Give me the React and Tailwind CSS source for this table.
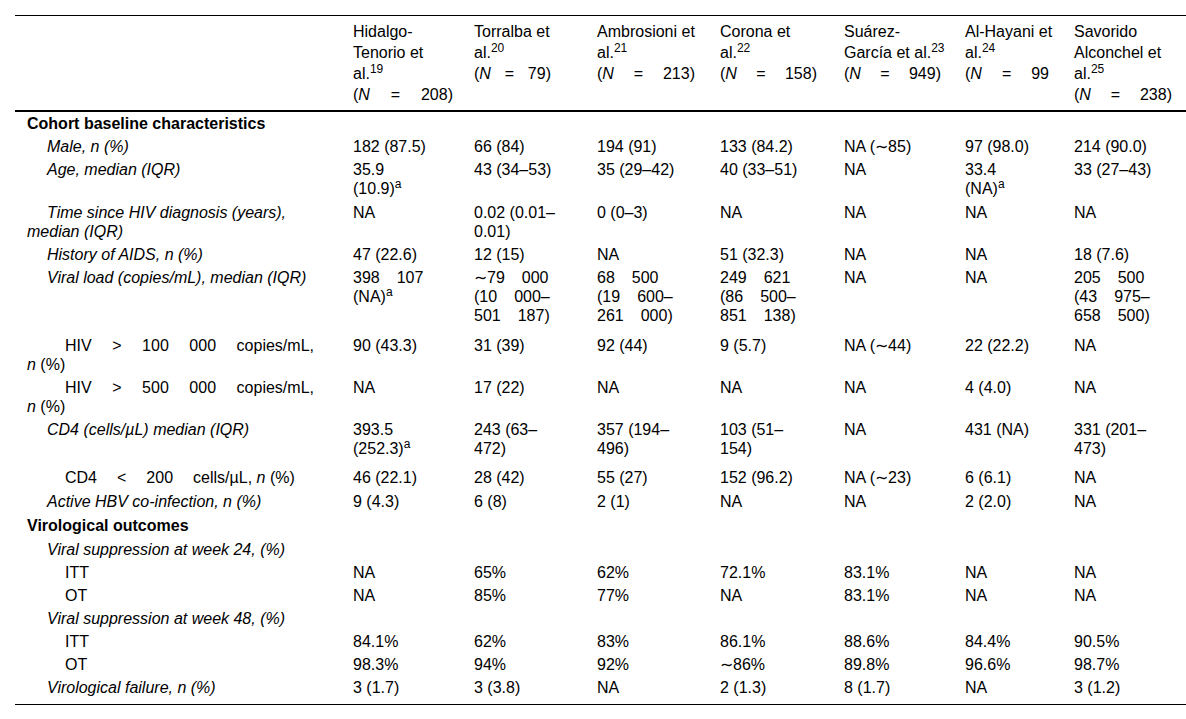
import React from 'react'

// spaced line: parts set apart by a wide gap (thin spaces in the source)
const J = (...parts) => ({ j: parts })
const N = (n) => ({ n: [<>(<i>N</i></>, '=', n] })

const colW = ['w-[100px]', 'w-[77px]', 'w-[98px]', 'w-[97px]', 'w-[97px]', 'w-[84px]', 'w-[98px]']

const heads = [
  ['Hidalgo-', 'Tenorio et', <>al.<sup>19</sup></>, N('208)')],
  ['Torralba et', <>al.<sup>20</sup></>, N('79)')],
  ['Ambrosioni et', <>al.<sup>21</sup></>, N('213)')],
  ['Corona et', <>al.<sup>22</sup></>, N('158)')],
  ['Suárez-', <>García et al.<sup>23</sup></>, N('949)')],
  ['Al-Hayani et', <>al.<sup>24</sup></>, N('99')],
  ['Savorido', 'Alconchel et', <>al.<sup>25</sup></>, N('238)')],
]

const a = <sup>a</sup>

const rows = [
  { section: 'Cohort baseline characteristics' },
  { label: ['Male, n (%)'], it: true, cells: ['182 (87.5)', '66 (84)', '194 (91)', '133 (84.2)', 'NA (∼85)', '97 (98.0)', '214 (90.0)'] },
  { label: ['Age, median (IQR)'], it: true, pb: 'pb-[3px]', cells: [['35.9', <>(10.9){a}</>], '43 (34–53)', '35 (29–42)', '40 (33–51)', 'NA', ['33.4', <>(NA){a}</>], '33 (27–43)'] },
  { label: ['Time since HIV diagnosis (years),', 'median (IQR)'], it: true, cells: ['NA', ['0.02 (0.01–', '0.01)'], '0 (0–3)', 'NA', 'NA', 'NA', 'NA'] },
  { label: ['History of AIDS, n (%)'], it: true, cells: ['47 (22.6)', '12 (15)', 'NA', '51 (32.3)', 'NA', 'NA', '18 (7.6)'] },
  {
    label: ['Viral load (copies/mL), median (IQR)'], it: true, pb: 'pb-[9px]',
    cells: [
      [J('398', '107'), <>(NA){a}</>],
      [J('∼79', '000'), J('(10', '000–'), J('501', '187)')],
      [J('68', '500'), J('(19', '600–'), J('261', '000)')],
      [J('249', '621'), J('(86', '500–'), J('851', '138)')],
      'NA', 'NA',
      [J('205', '500'), J('(43', '975–'), J('658', '500)')],
    ],
  },
  { label: [{ h: ['HIV', '>', '100', '000', 'copies/mL,'] }, <><i>n</i> (%)</>], lvl: 2, cells: ['90 (43.3)', '31 (39)', '92 (44)', '9 (5.7)', 'NA (∼44)', '22 (22.2)', 'NA'] },
  { label: [{ h: ['HIV', '>', '500', '000', 'copies/mL,'] }, <><i>n</i> (%)</>], lvl: 2, cells: ['NA', '17 (22)', 'NA', 'NA', 'NA', '4 (4.0)', 'NA'] },
  { label: ['CD4 (cells/µL) median (IQR)'], it: true, pb: 'pb-[8px]', cells: [['393.5', <>(252.3){a}</>], ['243 (63–', '472)'], ['357 (194–', '496)'], ['103 (51–', '154)'], 'NA', '431 (NA)', ['331 (201–', '473)']] },
  { label: ['cd4'], lvl: 2, pb: 'pb-[3px]', cells: ['46 (22.1)', '28 (42)', '55 (27)', '152 (96.2)', 'NA (∼23)', '6 (6.1)', 'NA'] },
  { label: ['Active HBV co-infection, n (%)'], it: true, pb: 'pb-[3px]', cells: ['9 (4.3)', '6 (8)', '2 (1)', 'NA', 'NA', '2 (2.0)', 'NA'] },
  { section: 'Virological outcomes', pb: 'pb-[3px]' },
  { label: ['Viral suppression at week 24, (%)'], it: true, cells: ['', '', '', '', '', '', ''] },
  { label: ['ITT'], lvl: 2, cells: ['NA', '65%', '62%', '72.1%', '83.1%', 'NA', 'NA'] },
  { label: ['OT'], lvl: 2, cells: ['NA', '85%', '77%', 'NA', '83.1%', 'NA', 'NA'] },
  { label: ['Viral suppression at week 48, (%)'], it: true, cells: ['', '', '', '', '', '', ''] },
  { label: ['ITT'], lvl: 2, cells: ['84.1%', '62%', '83%', '86.1%', '88.6%', '84.4%', '90.5%'] },
  { label: ['OT'], lvl: 2, cells: ['98.3%', '94%', '92%', '∼86%', '89.8%', '96.6%', '98.7%'] },
  { label: ['Virological failure, n (%)'], it: true, pb: 'pb-[7px]', cells: ['3 (1.7)', '3 (3.8)', 'NA', '2 (1.3)', '8 (1.7)', 'NA', '3 (1.2)'] },
]

function Line({ line, className = '' }) {
  if (line === 'cd4') {
    return (
      <div className={`flex gap-[20px] whitespace-nowrap ${className}`}>
        <span>CD4</span>
        <span>&lt;</span>
        <span>200</span>
        <span>
          cells/µL, <i>n</i> (%)
        </span>
      </div>
    )
  }
  if (line && (line.h || line.n)) {
    // justified over the whole line
    return (
      <div className={`flex justify-between whitespace-nowrap ${className}`}>
        {(line.h || line.n).map((p, i) => (
          <span key={i}>{p}</span>
        ))}
      </div>
    )
  }
  if (line && line.j) {
    return (
      <div className={`flex gap-[17px] whitespace-nowrap ${className}`}>
        {line.j.map((p, i) => (
          <span key={i}>{p}</span>
        ))}
      </div>
    )
  }
  return <div className={`whitespace-nowrap ${className}`}>{line}</div>
}

function Label({ row }) {
  const indent = row.lvl === 2 ? 'pl-[38px]' : 'pl-[20px]'
  return (
    <div className={`w-[287px] ${row.it ? 'italic' : ''}`}>
      {row.label.map((l, i) => (
        <Line key={i} line={l} className={i === 0 ? indent : ''} />
      ))}
    </div>
  )
}

export default function App() {
  return (
    <div className="min-h-[719px] bg-white pt-[15px] pl-[15px] font-['Liberation_Sans',Arial,sans-serif] text-[16px] leading-[19px] text-black">
      <table className="w-[1171px] table-fixed border-collapse border-t border-b border-black">
        <colgroup>
          <col className="w-[338px]" />
          <col className="w-[121px]" />
          <col className="w-[123px]" />
          <col className="w-[123px]" />
          <col className="w-[124px]" />
          <col className="w-[121px]" />
          <col className="w-[109px]" />
          <col className="w-[112px]" />
        </colgroup>
        <thead>
          <tr className="border-b-2 border-black">
            <th className="p-0" />
            {heads.map((h, i) => (
              <th key={i} className="p-0 pt-[5px] pb-[5px] text-left align-top font-normal leading-[21px]">
                <div className={colW[i]}>
                  {h.map((l, k) => (
                    <Line key={k} line={l} />
                  ))}
                </div>
              </th>
            ))}
          </tr>
        </thead>
        <tbody>
          {rows.map((r, i) => {
            const pb = r.pb || 'pb-[2px]'
            return r.section ? (
              <tr key={i}>
                <td colSpan={8} className={`pl-[12px] pt-[2px] font-bold ${pb}`}>
                  {r.section}
                </td>
              </tr>
            ) : (
              <tr key={i}>
                <td className={`pl-[12px] pt-[2px] align-top ${pb}`}>
                  <Label row={r} />
                </td>
                {r.cells.map((c, k) => (
                  <td key={k} className={`p-0 pt-[2px] align-top ${pb}`}>
                    <div className={colW[k]}>
                      {(Array.isArray(c) ? c : [c]).map((l, m) => (
                        <Line key={m} line={l} />
                      ))}
                    </div>
                  </td>
                ))}
              </tr>
            )
          })}
        </tbody>
      </table>
    </div>
  )
}
